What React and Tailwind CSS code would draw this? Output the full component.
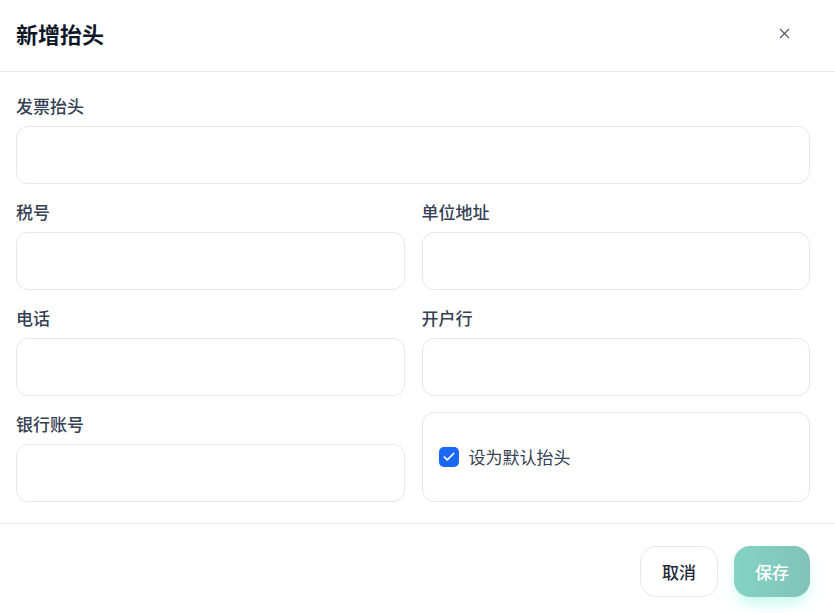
import { X, Check } from 'lucide-react';

const font = { fontFamily: '"Noto Sans CJK SC", "Noto Sans", sans-serif' };

const Field = ({ label }) => (
  <div className="flex flex-col">
    <label className="text-[17px] leading-6 font-medium text-gray-700 mb-2">{label}</label>
    <input className="h-[58px] w-full rounded-xl border border-gray-200 px-4 outline-none" />
  </div>
);

const App = () => {
  return (
    <div className="w-[835px] h-[613px] bg-white overflow-hidden" style={font}>
      <header className="h-[72px] flex items-center justify-between pl-4 pr-[42px] pb-1 border-b border-gray-200">
        <h2 className="text-[22px] font-bold text-gray-900">新增抬头</h2>
        <button className="text-gray-600">
          <X className="w-[17px] h-[17px]" strokeWidth={1.5} />
        </button>
      </header>

      <div className="pl-4 pr-[25px] pt-[22px] pb-[21px] border-b border-gray-200 flex flex-col gap-4">
        <Field label="发票抬头" />
        <div className="grid grid-cols-2 gap-x-[17px] gap-y-4">
          <Field label="税号" />
          <Field label="单位地址" />
          <Field label="电话" />
          <Field label="开户行" />
          <Field label="银行账号" />
          <div className="rounded-xl border border-gray-200 flex items-center gap-2.5 px-4">
            <span className="w-5 h-5 rounded-[5px] bg-[#1a66f5] flex items-center justify-center">
              <Check className="w-[14px] h-[14px] text-white" strokeWidth={3} />
            </span>
            <span className="text-[17px] text-gray-700">设为默认抬头</span>
          </div>
        </div>
      </div>

      <footer className="flex justify-end gap-4 pr-[25px] pt-[22px]">
        <button className="h-[51px] w-[78px] rounded-2xl border border-gray-200 bg-white text-[17px] font-medium text-gray-800">
          取消
        </button>
        <button className="h-[51px] w-[76px] rounded-2xl bg-gradient-to-r from-[#85d3c5] to-[#81c2b8] text-[17px] font-medium text-white shadow-lg shadow-teal-100">
          保存
        </button>
      </footer>
    </div>
  );
};

export default App;
